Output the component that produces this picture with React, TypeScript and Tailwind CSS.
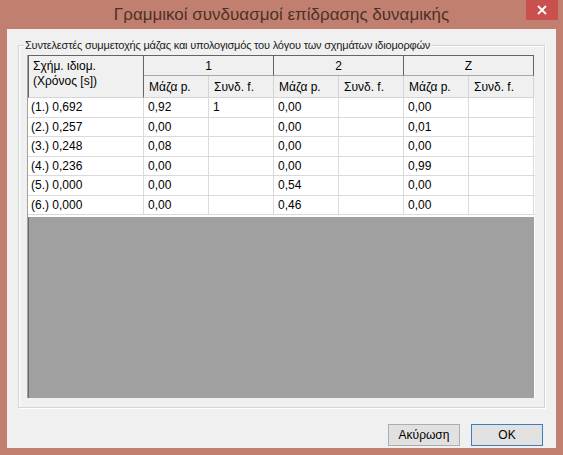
import React from 'react';

const groups = ['1', '2', 'Z'];

const rows: string[][] = [
  ['(1.) 0,692', '0,92', '1', '0,00', '', '0,00', ''],
  ['(2.) 0,257', '0,00', '', '0,00', '', '0,01', ''],
  ['(3.) 0,248', '0,08', '', '0,00', '', '0,00', ''],
  ['(4.) 0,236', '0,00', '', '0,00', '', '0,99', ''],
  ['(5.) 0,000', '0,00', '', '0,54', '', '0,00', ''],
  ['(6.) 0,000', '0,00', '', '0,46', '', '0,00', ''],
];

const font = { fontFamily: '"Liberation Sans", Arial, sans-serif' };

export default function App() {
  return (
    <div className="relative w-[563px] h-[455px] bg-[#c1806f] text-black" style={font}>
      {/* Title bar */}
      <div className="h-[29px] flex items-center justify-center text-[17px] text-[#4e302a]">
        Γραμμικοί συνδυασμοί επίδρασης δυναμικής
      </div>
      <div className="absolute top-0 right-[5px] w-[32px] h-[20px] bg-[#c9504c] flex items-center justify-center">
        <svg width="10" height="10" viewBox="0 0 10 10">
          <path d="M1 1 L9 9 M9 1 L1 9" stroke="#fff" strokeWidth="1.8" />
        </svg>
      </div>

      {/* Client area */}
      <div className="mx-[7px] h-[419px] bg-[#f0f0f0] pt-[16px] px-[11px]">
        {/* Group box */}
        <div className="relative h-[363px] border border-[#d5d5d5] shadow-[inset_1px_1px_0_#fff,1px_1px_0_#fff] pl-[8px] pt-[9px]">
          <span className="absolute -top-[8px] left-[5px] bg-[#f0f0f0] px-[1px] text-[11px] leading-[14px] text-[#1a1a1a] tracking-[-0.2px]">
            Συντελεστές συμμετοχής μάζας και υπολογισμός του λόγου των σχημάτων ιδιομορφών
          </span>

          <div className="w-[508px] h-[343px] border-l border-[#a0a0a0] bg-white flex flex-col text-[12px]">
            {/* Header */}
            <div className="flex h-[43px] bg-[#f0f0f0]">
              <div className="w-[116px] border border-[#646464] border-b-[#d5d5d5] pl-[4px] pt-[3px] leading-[15px]">
                <div>Σχήμ. ιδιομ.</div>
                <div>(Χρόνος [s])</div>
              </div>
              {groups.map((g) => (
                <div key={g} className="w-[130px] flex flex-col">
                  <div className="h-[21px] border border-l-0 border-[#646464] border-b-[#a8a8a8] flex items-center justify-center">
                    {g}
                  </div>
                  <div className="flex flex-1 border-b border-[#d5d5d5]">
                    <div className="w-[65px] border-r border-[#d5d5d5] pl-[5px] flex items-center">Μάζα p.</div>
                    <div className="w-[65px] border-r border-[#d5d5d5] pl-[5px] flex items-center">Συνδ. f.</div>
                  </div>
                </div>
              ))}
            </div>

            {/* Rows */}
            <div className="h-[119px] overflow-hidden">
              {rows.map((r, i) => (
                <div key={i} className="flex h-[19.5px] border-b border-[#dadada]">
                  {r.map((c, j) => (
                    <div
                      key={j}
                      className={`${j === 0 ? 'w-[116px] pl-[3px]' : 'w-[65px] pl-[4px]'} border-r border-[#dadada] flex items-center`}
                    >
                      {c}
                    </div>
                  ))}
                </div>
              ))}
            </div>

            {/* Empty area */}
            <div className="flex-1 bg-[#a0a0a0] border-l border-[#6a6a6a] w-[506px]" />
          </div>
        </div>

        {/* Buttons */}
        <div className="flex justify-end gap-[11px] mt-[16px] pr-[2px]">
          <button className="w-[72px] h-[22px] bg-[#e1e1e1] border border-[#adadad] text-[12px]">Ακύρωση</button>
          <button className="w-[72px] h-[22px] bg-[#e1e1e1] border border-[#3d7ebf] text-[12px]">OK</button>
        </div>
      </div>
    </div>
  );
}
